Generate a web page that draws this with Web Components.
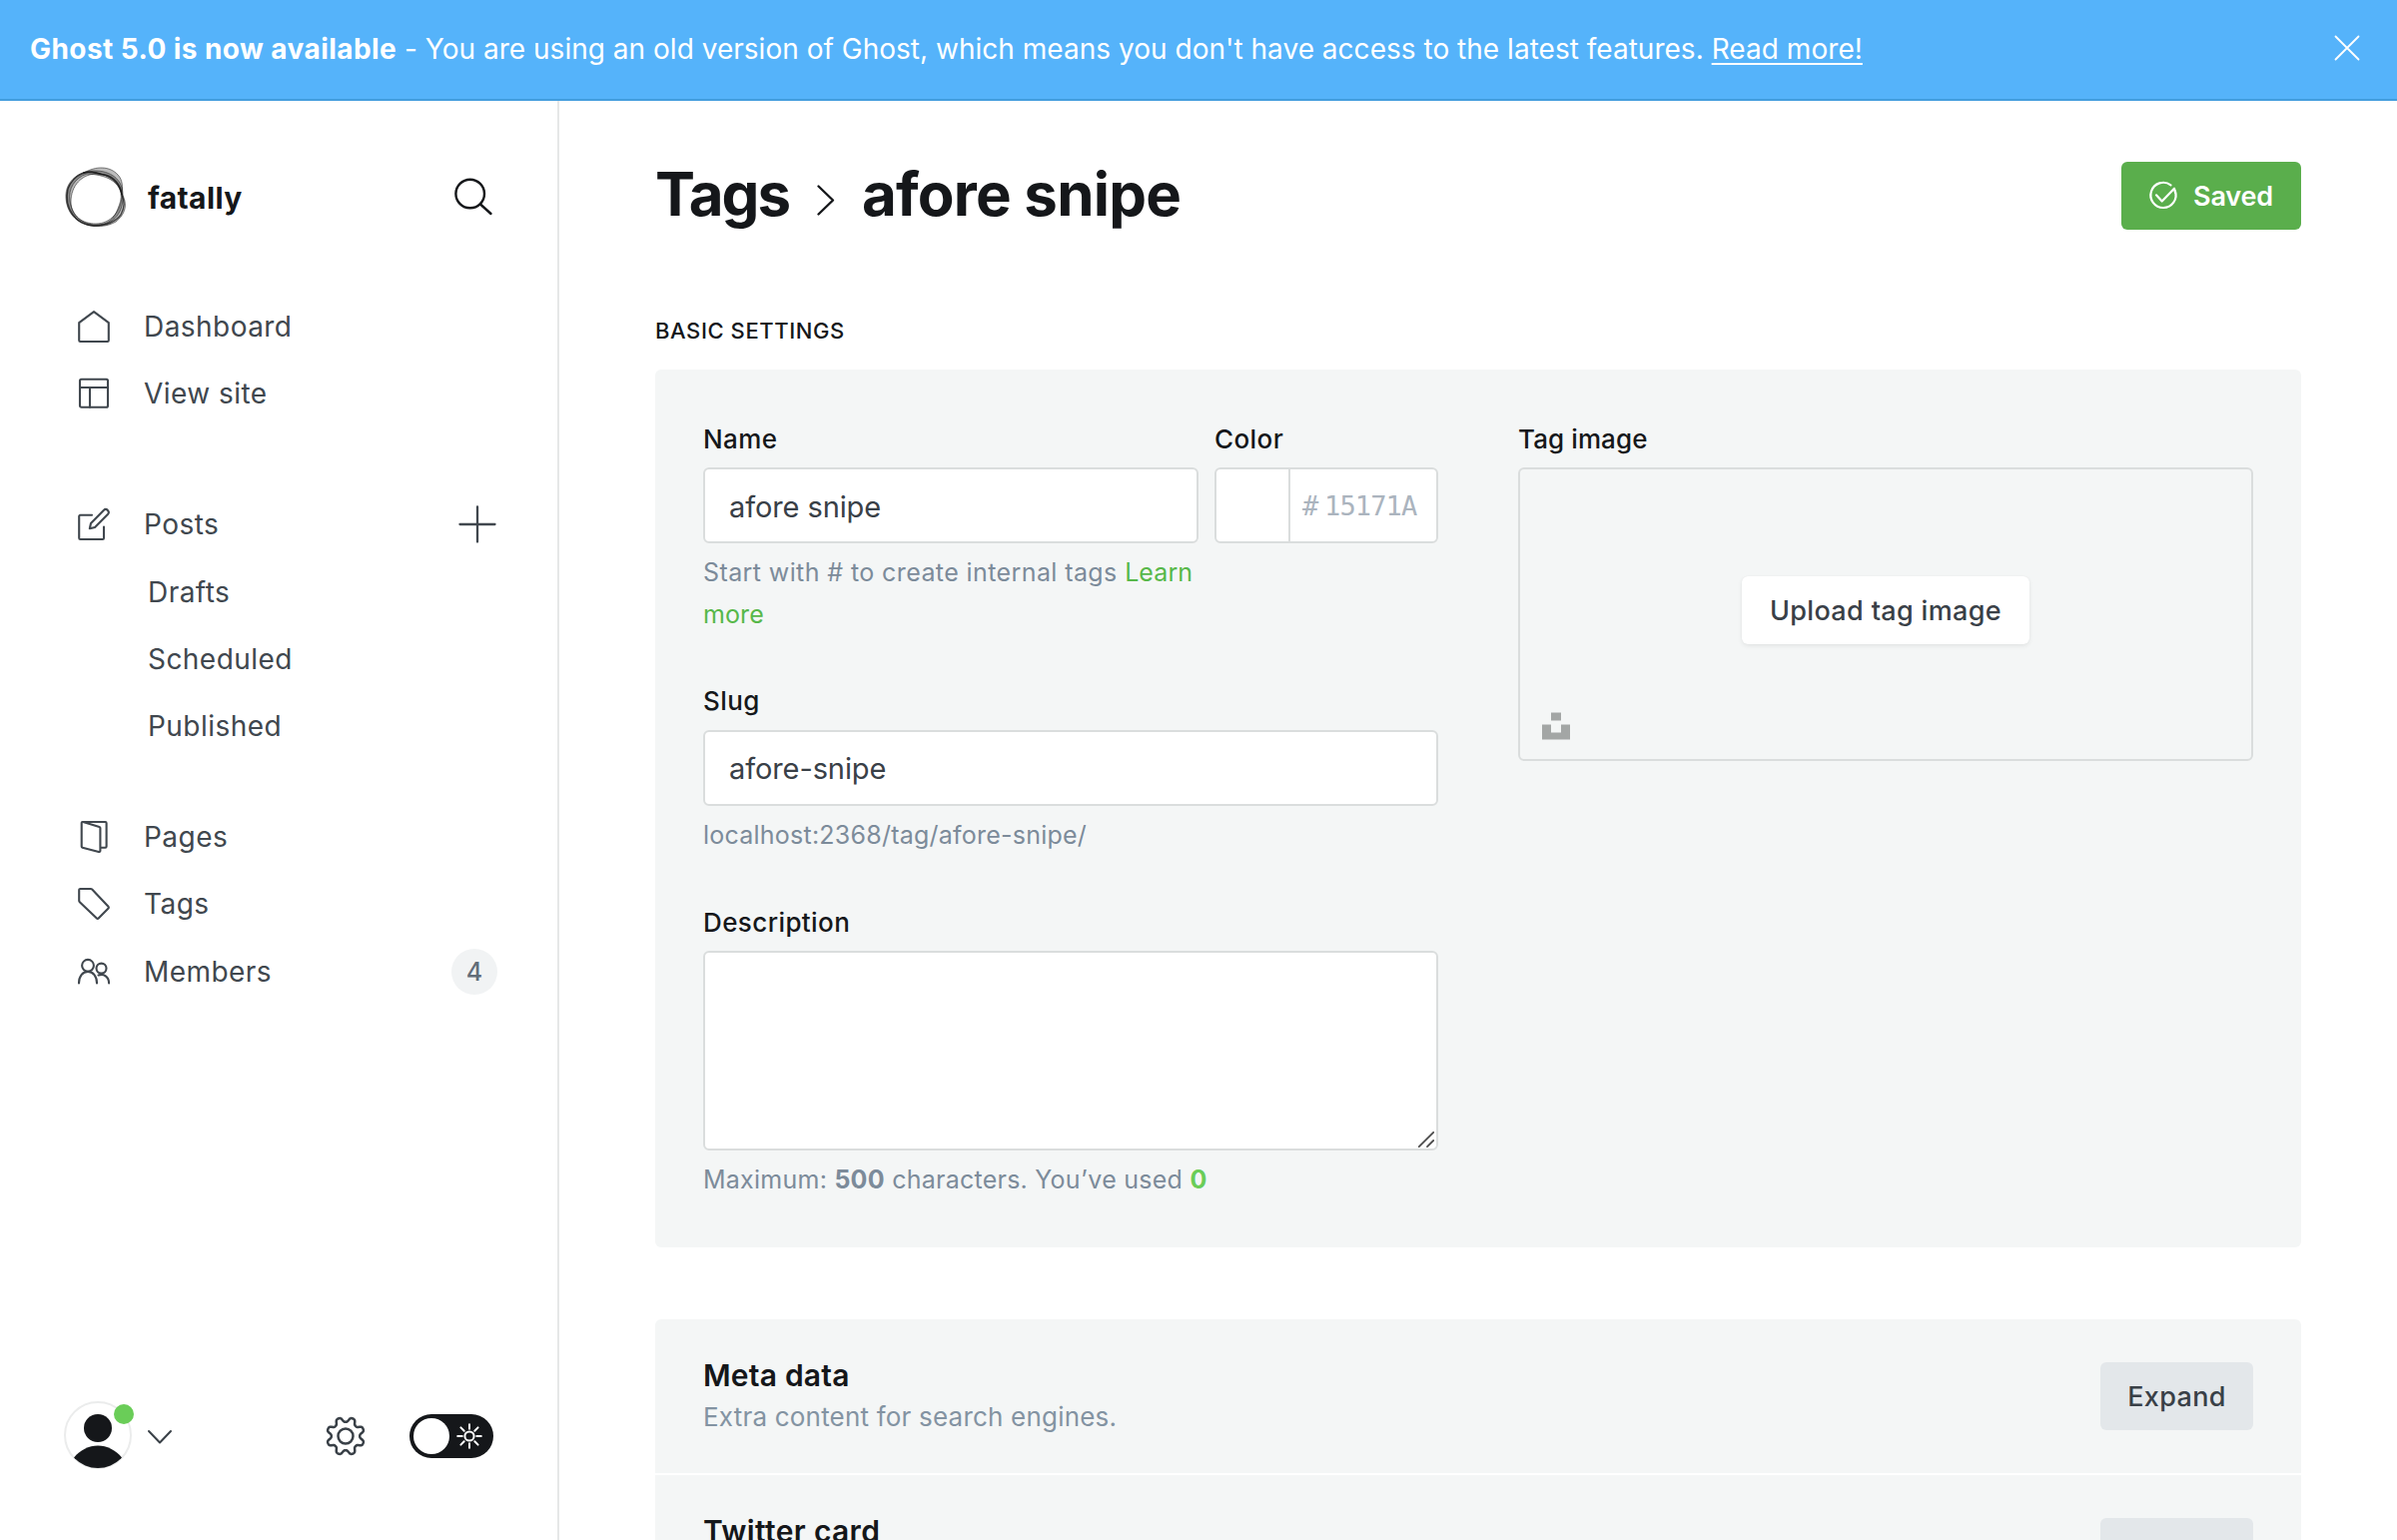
<!DOCTYPE html>
<html lang="en">
<head>
<meta charset="utf-8">
<title>Tags - afore snipe</title>
<style>
html,body{margin:0;padding:0;background:#fff}
body{width:2400px;height:1542px;overflow:hidden;font-family:Inter,"Liberation Sans",sans-serif;font-size:28px;color:#15171a;-webkit-font-smoothing:antialiased}
</style>
</head>
<body>
<ghost-app></ghost-app>
<script>
const define=(name,css,html)=>customElements.define(name,class extends HTMLElement{
  connectedCallback(){
    if(this.shadowRoot)return;
    const t=document.createElement('template');
    t.innerHTML='<style>*{box-sizing:border-box}svg{display:block;fill:none;overflow:visible}'+css+'</style>'+(typeof html==='function'?html(this):html);
    this.attachShadow({mode:'open'}).append(t.content.cloneNode(true));
  }
});

const gearPath=()=>{
  let d='';
  for(let i=0;i<192;i++){
    const a=i/192*Math.PI*2, w=Math.tanh(-1.5*Math.cos(8*a))/Math.tanh(1.5);
    const r=16.6+2.4*w;
    d+=(i?'L':'M')+(20+r*Math.cos(a)).toFixed(2)+' '+(20+r*Math.sin(a)).toFixed(2);
  }
  return d+'Z';
};
const icons={
  home:[32,32,'<path d="M1.2 12.2 16 1.2l14.8 11v17.6a1.2 1.2 0 0 1-1.2 1.2H2.4a1.2 1.2 0 0 1-1.2-1.2Z"/>'],
  layout:[32,32,'<rect x="2" y="1.7" width="28" height="28" rx="1.5"/><path d="M2 10h28M12 10v19.700"/>'],
  edit:[32,32,'<path d="M14 6.800H2.400A1.200 1.200 0 0 0 1.200 8v21.800A1.200 1.200 0 0 0 2.400 31h22.400a1.200 1.200 0 0 0 1.200-1.200V18.500"/><path d="M11.800 20.200l1.200-5.200L25.800 1.900a2.900 2.900 0 0 1 4.100 4.100L17 18.900Z"/>'],
  pages:[32,32,'<path d="M23 26.700h4.400a1.200 1.200 0 0 0 1.200-1.200V2.200A1.200 1.200 0 0 0 27.400 1H5"/><path d="M3.700 2.100v23.500a1.200 1.200 0 0 0 .9 1.100l16.300 4.200a1.200 1.200 0 0 0 1.500-1.200V7a1.200 1.200 0 0 0-.9-1.100L5.200 1a1.200 1.200 0 0 0-1.500 1.100Z"/>'],
  tag:[32,32,'<path d="M1.200 2.200A1.200 1.200 0 0 1 2.400 1H12.800a2 2 0 0 1 1.400.6L30.500 18.800a1.200 1.200 0 0 1 0 1.700L20.600 30.600a1.200 1.200 0 0 1-1.700 0L1.800 14.200a2 2 0 0 1-.6-1.400Z"/>'],
  members:[32,32,'<circle cx="10" cy="9.800" r="5.900"/><path d="M1 27.500c0-7 3.700-11.600 9-11.600s9 4.600 9 11.600"/><circle cx="23.500" cy="12.600" r="5"/><path d="M20.500 19.500c5.500-2 10.500 1.500 10.600 8"/>'],
  search:[38,38,'<circle cx="15.700" cy="16" r="14.300"/><path d="M26 26.500 36.500 36"/>'],
  plus:[36,36,'<path d="M18 .5v35M.5 18h35"/>'],
  down:[24,14,'<path d="m1 1 11 11.500L23 1"/>'],
  right:[18,31,'<path d="m1.500 1.500 14.500 14-14.500 14"/>'],
  close:[26,26,'<path d="m1.500 1.500 23 23m0-23-23 23"/>'],
  check:[28,28,'<path d="M21.500 3.300a12.600 12.600 0 1 0 4.400 6"/><path d="m7 13.300 5.700 6.200L25 6.800"/><path d="M25 6.800l1 4"/>'],
  gear:[40,40,'<path d="'+gearPath()+'"/><circle cx="20" cy="20" r="7.500"/>'],
  sun:[24,24,'<circle cx="12" cy="12" r="4.600"/><path d="M12 .2v4.600M12 19.200v4.600M.2 12h4.600M19.200 12h4.600M3.400 3.400l3.300 3.300M17.300 17.300l3.300 3.300M20.600 3.400l-3.300 3.300M6.700 17.300l-3.300 3.300"/>'],
  unsplash:[28,28,'<path stroke="none" fill="#a3a6a5" d="M9 .5h10v8H9ZM0 12.500h9v8h10v-8h9v15H0Z"/>'],
  grip:[16,16,'<path d="M.8 15.200 15.200.8M9 15.200 15.200 9"/>']
};
define('gh-icon',':host{display:block;flex:none}svg{stroke:currentColor;stroke-width:var(--w,2px);stroke-linecap:round;stroke-linejoin:round}',
  el=>{const [w,h,p]=icons[el.getAttribute('name')];return `<svg width="${w}" height="${h}" viewBox="0 0 ${w} ${h}">${p}</svg>`});

define('gh-banner',`:host{display:flex;align-items:center;justify-content:space-between;height:101px;box-sizing:border-box;border-bottom:2px solid #439ddd;background:#55b3fa;color:#fff;padding:0 37px 0 30px;white-space:pre}
 p{margin:-2px 0 0;line-height:42px;display:flex}b{font-weight:700;letter-spacing:.43px}.msg{letter-spacing:.02px}.link{text-decoration:underline;text-underline-offset:4px;text-decoration-thickness:2px;letter-spacing:.05px}gh-icon{margin-top:-3px;--w:1.800px}`,
 `<p><b>Ghost 5.0 is now available</b><span> - </span><span class="msg">You are using an old version of Ghost, which means you don't have access to the latest features. </span><span class="link">Read more!</span></p><gh-icon name="close"></gh-icon>`);

define('gh-logo',':host{display:block}',
 `<svg width="64" height="64" viewBox="-32 -32 64 64" fill-rule="evenodd">
 <g fill="#222" fill-opacity=".3" stroke="#222" stroke-opacity=".7" stroke-width=".8">
 <path d="M-30 1C-31-17-15-27 1-26 18-25 27-15 27-2 28 14 19 29-1 29-17 29-29 18-30 1ZM-25 5C-25 20-13 27 0 27 15 27 25 14 26 0 26-13 15-23 1-23-14-23-25-11-25 5Z"/>
 <path d="M-12-24C0-31 14-31 22-22 27-17 27-9 26-3 32 7 30 17 20 25 8 32-10 31-20 22-31 12-32-4-25-14-21-20-17-23-12-24ZM-9-23C-21-19-28-8-26 4-24 19-13 28 0 28 12 28 18 23 22 12 24 7 26 2 25-4 22-16 10-22-9-23Z"/>
 <path d="M-28-8C-22-23-7-28 5-23 15-20 24-13 26-2 29 5 29 10 25 18 19 26 9 29-2 29-20 28-32 12-28-8Z" fill="none" stroke="#111" stroke-width="1.300"/>
 <path d="M-13-24C-4-27 1-22 9-22 18-20 25-12 26-2" fill="none" stroke="#111" stroke-width="1.500"/></g></svg>`);

define('gh-nav-item',`:host{display:flex;align-items:center;height:67px;padding:0 62px 0 78px;color:#40474e;line-height:40px;letter-spacing:.45px}
 gh-icon{margin-right:34px;--w:2.100px}:host([sub]){padding-left:148px}::slotted([slot=end]){margin-left:auto}`,
 el=>(el.hasAttribute('icon')?`<gh-icon name="${el.getAttribute('icon')}"></gh-icon>`:'')+'<slot></slot><slot name="end"></slot>');
define('gh-count',':host{display:flex;align-items:center;justify-content:center;width:46px;height:46px;margin-right:-2px;border-radius:50%;background:#f1f3f4;color:#626d79;font-size:25px;font-weight:500;letter-spacing:0}','<slot></slot>');

define('gh-avatar',`:host{display:block;position:relative;width:68px;height:68px}i{position:absolute;left:50px;top:3px;width:20px;height:20px;border-radius:50%;background:#6acd58}`,
 `<svg width="68" height="68" viewBox="0 0 68 68"><clipPath id="c"><circle cx="34" cy="34" r="33"/></clipPath><circle cx="34" cy="34" r="33" fill="#fff" stroke="#ebecec" stroke-width="2"/><circle cx="34" cy="27" r="14" fill="#15171a"/><path clip-path="url(#c)" d="M10 56.500C16 49 25 44.500 34 44.500S52 49 58 56.500L52 68H16Z" fill="#15171a"/></svg><i></i>`);
define('gh-toggle',`:host{display:flex;align-items:center;width:84px;height:44px;border-radius:22px;background:#15171a;color:#fff;box-sizing:border-box;padding:0 12px 0 4px;justify-content:space-between}b{width:36px;height:36px;border-radius:50%;background:#fff}`,
 '<b></b><gh-icon name="sun"></gh-icon>');

define('gh-sidebar',`:host{display:flex;flex-direction:column;width:560px;box-sizing:border-box;border-right:2px solid #e6e7e7;background:#fff}
 header{display:flex;align-items:center;height:192px;padding:0 65px 1px 64px}header b{font-size:30px;margin:2px auto 0 20px;line-height:40px;letter-spacing:.4px}
 nav{flex:1}.gap{height:64px}.gap2{height:44px}
 .first-sub,.last{margin-top:1px}
 footer{display:flex;align-items:center;padding:0 64px 71px;color:#394047}
 gh-icon[name=down]{margin:3px auto 0 16px}gh-icon[name=gear]{margin-right:44px;margin-top:2px;--w:2.500px}gh-toggle{margin-top:2px}gh-icon[name=plus]{--w:2.300px}`,
 `<header><gh-logo></gh-logo><b>fatally</b><gh-icon name="search" style="--w:2.400px"></gh-icon></header>
 <nav><gh-nav-item icon="home">Dashboard</gh-nav-item><gh-nav-item icon="layout">View site</gh-nav-item><div class="gap"></div>
 <gh-nav-item icon="edit">Posts<gh-icon slot="end" name="plus"></gh-icon></gh-nav-item><gh-nav-item sub class="first-sub">Drafts</gh-nav-item><gh-nav-item sub>Scheduled</gh-nav-item><gh-nav-item sub>Published</gh-nav-item><div class="gap2"></div>
 <gh-nav-item icon="pages">Pages</gh-nav-item><gh-nav-item icon="tag">Tags</gh-nav-item><gh-nav-item icon="members" class="last">Members<gh-count slot="end">4</gh-count></gh-nav-item></nav>
 <footer><gh-avatar></gh-avatar><gh-icon name="down"></gh-icon><gh-icon name="gear"></gh-icon><gh-toggle></gh-toggle></footer>`);

define('gh-button',`:host{display:flex;align-items:center;justify-content:center;height:68px;box-sizing:border-box;border-radius:6px;font-size:27px;font-weight:500;background:#e3e7ea;color:#394047;letter-spacing:.35px;flex:none}
 :host([kind=green]){background:#5aae4c;color:#fff;width:180px;font-weight:600;letter-spacing:-.2px;gap:16px}
 :host([kind=white]){background:#fff;width:288px;box-shadow:0 0 1px rgba(0,0,0,.08),0 2px 5px rgba(0,0,0,.07)}
 :host([kind=grey]){width:153px}`,'<slot></slot>');

define('gh-field',`:host{display:block}label{display:block;font-size:26px;font-weight:500;line-height:36px;padding-top:var(--shift,1px);height:37px;margin-bottom:10px;letter-spacing:var(--label-ls,.4px)}
 .help{font-size:25px;line-height:42px;margin-top:8px;color:#7c8b9a;letter-spacing:var(--help-ls,.4px)}`,
 el=>`<label>${el.getAttribute('label')}</label><slot></slot>${el.querySelector('[slot=help]')?'<div class="help"><slot name="help"></slot></div>':''}`);
define('gh-input',`:host{display:flex;align-items:center;height:76px;box-sizing:border-box;border:2px solid #dadddd;border-radius:6px;background:#fff;padding:0 24px;font-size:29px;color:#394047;letter-spacing:-.1px}:host([first]){padding-top:2px}`,'<slot></slot>');
define('gh-textarea',`:host{display:flex;align-items:flex-end;justify-content:flex-end;height:200px;box-sizing:border-box;border:2px solid #dadddd;border-radius:6px;background:#fff;padding:0 2px 1px;color:#4c4c4c}`,'<gh-icon name="grip" style="--w:1.800px"></gh-icon>');
define('gh-color',`:host{display:flex;height:76px;width:224px;box-sizing:border-box;border:2px solid #dadddd;border-radius:6px;background:#fff;color:#abb4be;font:27px/74px "DejaVu Sans Mono","Liberation Mono",monospace}
 .well{width:74px;border-right:2px solid #dadddd}.hash{margin-left:12px;width:22px}.hex{letter-spacing:-.850px}`,'<div class="well"></div><span class="hash">#</span><span class="hex">15171A</span>');
define('gh-upload',`:host{display:grid;grid-template-rows:107px 68px 1fr;justify-items:center;height:294px;box-sizing:border-box;border:2px solid #dadddd;border-radius:6px;padding:0 22px}
 gh-button{grid-row:2}gh-icon{grid-row:3;justify-self:start;align-self:end;margin-bottom:19px}`,'<gh-button kind="white">Upload tag image</gh-button><gh-icon name="unsplash"></gh-icon>');
define('gh-section',`:host{display:flex;align-items:center;justify-content:space-between;height:156px;box-sizing:border-box;border-bottom:2px solid #fff;background:#f4f6f6;padding:0 48px}
 h4{margin:-1px 0 1px;font-size:30px;font-weight:600;line-height:40px;letter-spacing:.2px}:host(:last-of-type) h4{letter-spacing:.35px}p{margin:0;min-height:41px;font-size:26px;line-height:41px;letter-spacing:.2px;color:#8393a2}:host(:first-of-type){border-radius:6px 6px 0 0}`,
 el=>`<div><h4>${el.getAttribute('heading')}</h4><p><slot></slot></p></div><gh-button kind="grey">Expand</gh-button>`);

define('gh-main',`:host{display:block;flex:1;padding:61px 96px 0;overflow:hidden}
 header{display:flex;align-items:center;justify-content:space-between;height:68px}h2{display:flex;align-items:center;margin:-4px 0 0;font-size:60px;font-weight:700;line-height:72px;color:#15171a}
 h2 .a{letter-spacing:-2px}h2 .b{letter-spacing:-.8px}h2 gh-icon{margin:12px 27px 0 28px}
 h4{margin:85px 0 23px;font-size:22px;font-weight:500;line-height:32px;letter-spacing:.58px}
 .panel{display:grid;grid-template-columns:1fr 1fr;gap:80px;background:#f4f6f6;border-radius:6px;padding:51px 48px 47px}
 .left{display:flex;flex-direction:column;gap:48px}.pair{display:grid;grid-template-columns:496px 224px;gap:16px}
 em{font-style:normal;color:#57b84a;letter-spacing:.1px}.n{color:#6acd58}.sections{margin-top:72px}`,
 `<header><h2><span class="a">Tags</span><gh-icon name="right" style="--w:2.400px"></gh-icon><span class="b">afore snipe</span></h2><gh-button kind="green"><gh-icon name="check" style="--w:2.200px"></gh-icon>Saved</gh-button></header>
 <h4>BASIC SETTINGS</h4>
 <div class="panel"><div class="left">
  <div class="pair"><gh-field label="Name"><gh-input first>afore snipe</gh-input><span slot="help">Start with # to create internal tags <em>Learn</em> <em>more</em></span></gh-field><gh-field label="Color"><gh-color></gh-color></gh-field></div>
  <gh-field label="Slug" style="--help-ls:.230px;--shift:0px"><gh-input>afore-snipe</gh-input><span slot="help">localhost:2368/tag/afore-snipe/</span></gh-field>
  <gh-field label="Description" style="--help-ls:.250px"><gh-textarea></gh-textarea><span slot="help">Maximum: <b>500</b> characters. You’ve used <b class="n">0</b></span></gh-field>
 </div><gh-field label="Tag image" style="--label-ls:.100px"><gh-upload></gh-upload></gh-field></div>
 <div class="sections"><gh-section heading="Meta data">Extra content for search engines.</gh-section><gh-section heading="Twitter card"></gh-section></div>`);
define('ghost-app',':host{display:flex;flex-direction:column;height:1542px;overflow:hidden}div{display:flex;flex:1;min-height:0}','<gh-banner></gh-banner><div><gh-sidebar></gh-sidebar><gh-main></gh-main></div>');
</script>
</body>
</html>
